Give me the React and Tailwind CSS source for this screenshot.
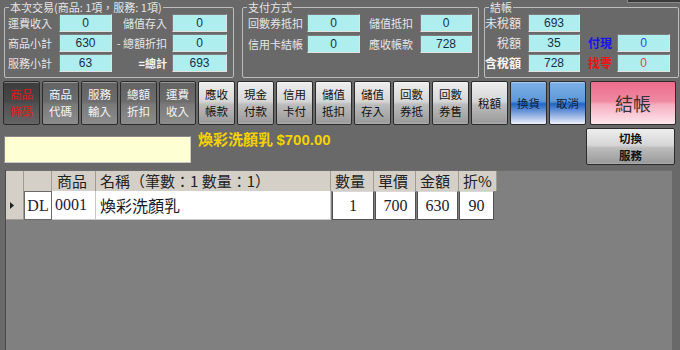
const CJK = "font-['Noto_Sans_CJK_TC','Noto_Sans_CJK_SC',sans-serif]";
const NUM = "font-['Liberation_Sans','Noto_Sans_CJK_TC',sans-serif]";
const SERIF = "font-['Liberation_Serif','Noto_Sans_CJK_TC',serif]";

function Box({ v, w, color }) {
  return (
    <div
      className={`${w} h-[18px] shrink-0 bg-[#afeeee] border border-t-[#7c7c7c] border-l-[#7c7c7c] border-b-[#e2e2e2] border-r-[#e2e2e2] flex items-center justify-center text-[12px] leading-none ${NUM} ${color || "text-[#15304a]"}`}
    >
      {v}
    </div>
  );
}

function Lbl({ children, w, cls }) {
  return (
    <div className={`${w} shrink-0 h-[18px] flex items-center text-[11px] leading-none whitespace-nowrap ${cls || "text-[#e6e6e6]"}`}>
      {children}
    </div>
  );
}

const GRAD = {
  dark: "bg-[linear-gradient(to_bottom,#626262_0%,#6c6c6c_46%,#7a7a7a_54%,#8c8c8c_100%)] text-[#f4f4f4]",
  sel: "bg-[linear-gradient(to_bottom,#3c3c3c_0%,#484848_46%,#525252_54%,#646464_100%)] text-[#e01818]",
  light: "bg-[linear-gradient(to_bottom,#eeeeee_0%,#d6d6d6_46%,#bcbcbc_54%,#9c9c9c_96%,#b0b0b0_100%)] text-[#111111]",
  blue: "bg-[linear-gradient(to_bottom,#7eb0e6_0%,#5e98da_46%,#1f66c6_52%,#86a6de_76%,#eef2fc_100%)] text-[#0c1a3a]",
  pink: "bg-[linear-gradient(to_bottom,#ec6c8c_0%,#f08aa2_46%,#f6aec0_54%,#fde6ec_100%)] text-[#333333]",
};

function Btn({ t, v, w }) {
  return (
    <div
      className={`${w || "w-[37px]"} h-[44px] shrink-0 rounded-[2px] border border-[#2c2c2c] shadow-[inset_0_1px_0_rgba(255,255,255,0.35)] flex flex-col items-center justify-center ${CJK} ${GRAD[v]}`}
    >
      {t.map((l, i) => (
        <span key={i} className="block text-[11.5px] leading-[17px]">{l}</span>
      ))}
    </div>
  );
}

export default function App() {
  const hdr = `h-[20px] shrink-0 bg-[#d4d0c8] border-r border-[#a09c94] text-[15px] leading-[20px] text-[#222222] whitespace-nowrap ${CJK}`;
  return (
    <div className={`relative w-[680px] h-[350px] overflow-hidden bg-[#696969] ${CJK}`}>
      <div className="absolute top-0 right-0 w-[53px] h-[3px] bg-[#3a3a3a] border-l border-b border-[#8a8a8a]" />

      {/* top group boxes */}
      <div className="flex h-[81px] items-start">
        <fieldset className="ml-[4px] w-[230px] h-[78px] border border-[#bdbdbd] rounded-[2px]">
          <legend className="ml-[4px] px-[1px] text-[11px] leading-[14px] text-[#e6e6e6] whitespace-nowrap">
            本次交易(商品: 1項，服務: 1項)
          </legend>
          <div className="flex flex-col gap-[2px] pl-[3px]">
            <div className="flex">
              <Lbl w="w-[51px]">運費收入</Lbl>
              <Box w="w-[53px]" v="0" />
              <Lbl w="w-[60px]" cls="text-[#e6e6e6] justify-end pr-[5px]">儲值存入</Lbl>
              <Box w="w-[55px]" v="0" />
            </div>
            <div className="flex">
              <Lbl w="w-[51px]">商品小計</Lbl>
              <Box w="w-[53px]" v="630" />
              <Lbl w="w-[60px]" cls="text-[#e6e6e6] justify-end pr-[5px]">- 總額折扣</Lbl>
              <Box w="w-[55px]" v="0" />
            </div>
            <div className="flex">
              <Lbl w="w-[51px]">服務小計</Lbl>
              <Box w="w-[53px]" v="63" />
              <Lbl w="w-[60px]" cls="text-[#f4f4f4] font-bold justify-end pr-[5px]">=總計</Lbl>
              <Box w="w-[55px]" v="693" />
            </div>
          </div>
        </fieldset>

        <fieldset className="ml-[8px] w-[237px] h-[78px] border border-[#bdbdbd] rounded-[2px]">
          <legend className="ml-[4px] px-[1px] text-[11px] leading-[14px] text-[#e6e6e6] whitespace-nowrap">
            支付方式
          </legend>
          <div className="flex flex-col gap-[3px] pl-[5px]">
            <div className="flex">
              <Lbl w="w-[59px]">回數券抵扣</Lbl>
              <Box w="w-[53px]" v="0" />
              <Lbl w="w-[60px]" cls="text-[#e6e6e6] justify-end pr-[7px]">儲值抵扣</Lbl>
              <Box w="w-[52px]" v="0" />
            </div>
            <div className="flex">
              <Lbl w="w-[59px]">信用卡結帳</Lbl>
              <Box w="w-[53px]" v="0" />
              <Lbl w="w-[60px]" cls="text-[#e6e6e6] justify-end pr-[7px]">應收帳款</Lbl>
              <Box w="w-[52px]" v="728" />
            </div>
          </div>
        </fieldset>

        <fieldset className="ml-[5px] w-[195px] h-[78px] border border-[#bdbdbd] rounded-[2px]">
          <legend className="ml-[4px] px-[1px] text-[11px] leading-[14px] text-[#e6e6e6] whitespace-nowrap">
            結帳
          </legend>
          <div className="flex flex-col gap-[2px] pl-[3px]">
            <div className="flex">
              <Lbl w="w-[40px]" cls="text-[#e6e6e6] text-[12px] justify-end pr-[7px]">未稅額</Lbl>
              <Box w="w-[52px]" v="693" />
            </div>
            <div className="flex">
              <Lbl w="w-[40px]" cls="text-[#e6e6e6] text-[12px] justify-end pr-[7px]">稅額</Lbl>
              <Box w="w-[52px]" v="35" />
              <Lbl w="w-[37px]" cls="text-[#1414e6] text-[12px] font-bold justify-end pr-[5px]">付現</Lbl>
              <Box w="w-[53px]" v="0" color="text-[#2a4cf0]" />
            </div>
            <div className="flex">
              <Lbl w="w-[40px]" cls="text-[#f8f8f8] text-[12px] font-bold justify-end pr-[7px]">含稅額</Lbl>
              <Box w="w-[52px]" v="728" />
              <Lbl w="w-[37px]" cls="text-[#f01010] text-[12px] font-bold justify-end pr-[5px]">找零</Lbl>
              <Box w="w-[53px]" v="0" color="text-[#e04848]" />
            </div>
          </div>
        </fieldset>
      </div>

      {/* button row */}
      <div className="flex h-[44px] pl-[3px] gap-[2px]">
        <Btn v="sel" t={["商品", "條碼"]} />
        <Btn v="dark" t={["商品", "代碼"]} />
        <Btn v="dark" t={["服務", "輸入"]} />
        <Btn v="dark" t={["總額", "折扣"]} />
        <Btn v="dark" t={["運費", "收入"]} />
        <Btn v="light" t={["應收", "帳款"]} />
        <Btn v="light" t={["現金", "付款"]} />
        <Btn v="light" t={["信用", "卡付"]} />
        <Btn v="light" t={["儲值", "抵扣"]} />
        <Btn v="light" t={["儲值", "存入"]} />
        <Btn v="light" t={["回數", "券抵"]} />
        <Btn v="light" t={["回數", "券售"]} />
        <Btn v="light" t={["稅額"]} />
        <Btn v="blue" t={["換貨"]} />
        <Btn v="blue" t={["取消"]} />
        <div
          className={`ml-[2px] w-[86px] h-[44px] shrink-0 rounded-[2px] border border-[#2c2c2c] flex items-center justify-center text-[18px] ${CJK} ${GRAD.pink}`}
        >
          結帳
        </div>
      </div>

      {/* middle */}
      <div className="flex h-[45px] items-start">
        <div className="ml-[4px] mt-[11px] w-[187px] h-[27px] bg-[#ffffd4] border border-t-[#8a8a8a] border-l-[#8a8a8a] border-b-[#c8c8c8] border-r-[#c8c8c8]" />
        <div className={`ml-[7px] mt-[5px] text-[15px] leading-[18px] font-bold text-[#f6d200] whitespace-nowrap ${CJK}`}>
          煥彩洗顏乳 <span className={NUM}>$700.00</span>
        </div>
        <div
          className={`ml-auto mr-[5px] mt-[3px] w-[89px] h-[37px] rounded-[2px] border border-[#2c2c2c] flex flex-col items-center justify-center font-bold ${CJK} ${GRAD.light}`}
        >
          <span className="block text-[11.5px] leading-[17px]">切換</span>
          <span className="block text-[11.5px] leading-[17px]">服務</span>
        </div>
      </div>

      {/* grid */}
      <div className="ml-[5px] mr-[8px] h-[180px] bg-[#808080] border-l border-[#4a4a4a]">
        <div className="flex border-t border-[#6e6e6e]">
          <div className={`${hdr} w-[18px]`} />
          <div className={`${hdr} w-[28px]`} />
          <div className={`${hdr} w-[44px] pl-[5px]`}>商品</div>
          <div className={`${hdr} w-[235px] pl-[4px]`}>名稱（筆數：1 數量：1）</div>
          <div className={`${hdr} w-[43px] pl-[4px]`}>數量</div>
          <div className={`${hdr} w-[42px] pl-[4px]`}>單價</div>
          <div className={`${hdr} w-[43px] pl-[4px]`}>金額</div>
          <div className={`${hdr} w-[38px] pl-[4px]`}>折%</div>
        </div>
        <div className="flex h-[29px]">
          <div className="w-[18px] shrink-0 bg-[#d4d0c8] border-r border-b border-[#a09c94] flex items-center pl-[4px]">
            <svg width="4" height="7" viewBox="0 0 4 7">
              <path d="M0 0 L4 3.5 L0 7 Z" fill="#222" />
            </svg>
          </div>
          <div className={`w-[28px] shrink-0 bg-white border border-[#6a6a6a] flex items-center justify-center text-[16px] text-[#2a1a2e] ${SERIF}`}>
            DL
          </div>
          <div className={`w-[44px] shrink-0 bg-white border-r border-b border-[#c8c8c8] flex items-center pl-[3px] text-[16px] text-[#1a1a3a] ${SERIF}`}>
            0001
          </div>
          <div className={`w-[235px] shrink-0 bg-white border-r border-b border-[#c8c8c8] flex items-center pl-[4px] text-[16px] text-[#1a1a2a] ${CJK}`}>
            煥彩洗顏乳
          </div>
          {[
            ["w-[42px]", "1"],
            ["w-[41px]", "700"],
            ["w-[41px]", "630"],
            ["w-[35px]", "90"],
          ].map(([w, v], i) => (
            <div
              key={i}
              className={`${w} ml-[1px] shrink-0 bg-white border border-[#505050] border-t-[#d8d8d8] flex items-center justify-center text-[16px] text-[#1a1a2a] ${SERIF}`}
            >
              {v}
            </div>
          ))}
        </div>
      </div>
    </div>
  );
}
